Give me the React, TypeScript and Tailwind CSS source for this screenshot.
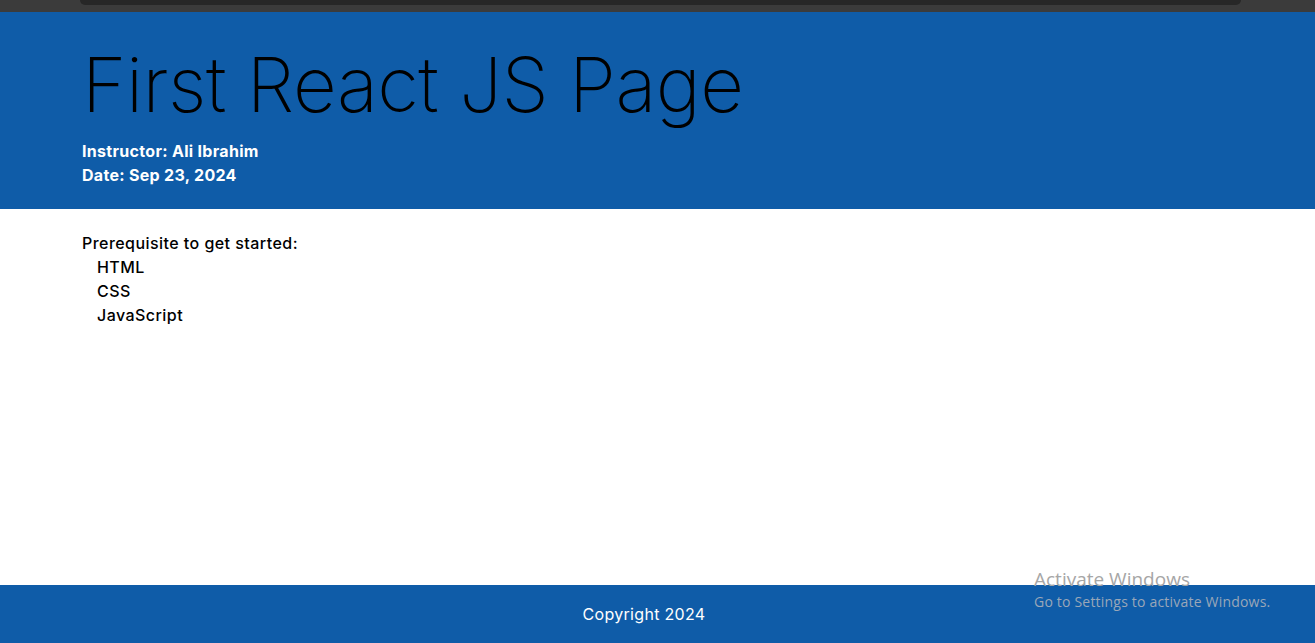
export default function App() {
  const font = { fontFamily: "Inter, 'Noto Sans', sans-serif" };
  return (
    <div className="relative flex h-[643px] flex-col bg-white" style={font}>
      <div className="h-[12px] bg-[#3b3b3b] pl-[80px] pr-[74px]">
        <div className="h-[5px] rounded-b-[8px] bg-[#272727]" />
      </div>
      <header className="h-[197px] bg-[#0f5ca8] pl-[82px] pt-[34px]">
        <h1 className="text-[76px] font-extralight leading-[76px] tracking-[-0.5px] text-black">First React JS Page</h1>
        <div className="mt-[17px] text-[16px] font-bold leading-[24px] tracking-[0.3px] text-white">
          <div>Instructor: Ali Ibrahim</div>
          <div>Date: Sep 23, 2024</div>
        </div>
      </header>
      <main className="flex-1 pl-[82px] pt-[22px] text-[16px] font-medium leading-[24px] tracking-[0.45px] text-black">
        <div>Prerequisite to get started:</div>
        <ul className="pl-[15px]">
          <li>HTML</li>
          <li>CSS</li>
          <li>JavaScript</li>
        </ul>
      </main>
      <footer className="flex h-[58px] items-center justify-center bg-[#0f5ca8] pr-[27px] text-[16px] tracking-[0.3px] text-white">
        Copyright 2024
      </footer>
      <div className="pointer-events-none absolute left-[1034px] top-[566px]" style={{ fontFamily: "'Open Sans', 'Noto Sans', sans-serif" }}>
        <div className="text-[19px] leading-[26px] text-[#a6a6a6]">Activate Windows</div>
        <div className="text-[14px] leading-[20px] tracking-[0.2px] text-[#9aa7b8]">Go to Settings to activate Windows.</div>
      </div>
    </div>
  );
}
